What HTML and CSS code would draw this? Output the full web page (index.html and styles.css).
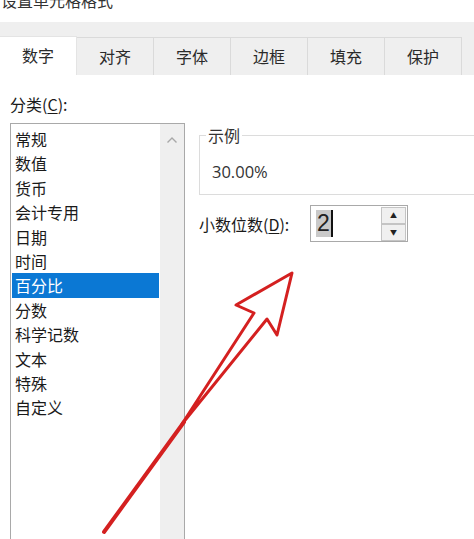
FILE: index.html
```html
<!DOCTYPE html>
<html lang="zh-CN">
<head>
    <meta charset="UTF-8">
    <meta name="viewport" content="width=device-width, initial-scale=1.0">
    <title>设置单元格格式</title>
    <link rel="stylesheet" href="styles.css">
</head>
<body>
    <div class="title">设置单元格格式</div>

    <div class="tab-strip">
        <div class="tab active">数字</div>
        <div class="tab">对齐</div>
        <div class="tab">字体</div>
        <div class="tab">边框</div>
        <div class="tab">填充</div>
        <div class="tab">保护</div>
    </div>

    <div class="content">
        <div class="left-col">
            <div class="field-label">分类(<u>C</u>):</div>
            <div class="listbox">
                <ul class="items">
                    <li>常规</li>
                    <li>数值</li>
                    <li>货币</li>
                    <li>会计专用</li>
                    <li>日期</li>
                    <li>时间</li>
                    <li class="selected">百分比</li>
                    <li>分数</li>
                    <li>科学记数</li>
                    <li>文本</li>
                    <li>特殊</li>
                    <li>自定义</li>
                </ul>
                <div class="scrollbar">
                    <svg class="chevron" width="12" height="8" viewBox="0 0 12 8">
                        <polyline points="1.5,6.5 6,2 10.5,6.5" fill="none" stroke="#a8a8a8" stroke-width="1.4"/>
                    </svg>
                </div>
            </div>
        </div>

        <div class="right-col">
            <fieldset class="sample">
                <legend>示例</legend>
                <div class="sample-value">30.00%</div>
            </fieldset>

            <div class="decimal-row">
                <div class="decimal-label">小数位数(<u>D</u>):</div>
                <div class="spinner">
                    <div class="spin-text"><span class="sel">2</span><span class="caret"></span></div>
                    <div class="spin-buttons">
                        <div class="spin-btn">&#9650;</div>
                        <div class="spin-btn">&#9660;</div>
                    </div>
                </div>
            </div>
        </div>
    </div>

    <!-- red annotation arrow drawn over the dialog -->
    <svg class="arrow" width="474" height="539" viewBox="0 0 474 539">
        <line x1="104" y1="532" x2="184" y2="422" stroke="#d42020" stroke-width="4" stroke-linecap="round"/>
        <polygon points="182,424 254,313 236,305 292,273 277,335 267,319" fill="none" stroke="#d42020" stroke-width="3" stroke-linejoin="round"/>
    </svg>
</body>
</html>
```

FILE: styles.css
```css
body {
    margin: 0;
    width: 474px;
    height: 539px;
    overflow: hidden;
    position: relative;
    background: #ffffff;
    font-family: "Noto Sans CJK SC", "Noto Sans", sans-serif;
    color: #1a1a1a;
}

.title {
    margin-top: -10px;
    height: 32px;
    padding-left: 1px;
    font-size: 16px;
    line-height: 20px;
    color: #333;
}

.tab-strip {
    display: flex;
    align-items: flex-end;
    height: 53px;
    background: #efefef;
    box-sizing: border-box;
    padding-top: 15px;
}

.tab {
    width: 77px;
    height: 38px;
    box-sizing: border-box;
    border: 1px solid #dadada;
    border-left: none;
    border-bottom: none;
    background: #efefef;
    font-size: 16px;
    text-align: center;
    line-height: 36px;
    color: #2a2a2a;
}

.tab.active {
    height: 39px;
    background: #ffffff;
    border-color: #e4e4e4;
}

.content {
    display: flex;
}

.left-col {
    padding-left: 10px;
}

.field-label {
    margin-top: 19px;
    margin-bottom: 9px;
    font-size: 16px;
    line-height: 20px;
}

.field-label u,
.decimal-label u {
    text-decoration-thickness: 1px;
    text-underline-offset: 2px;
}

.listbox {
    display: flex;
    width: 175px;
    height: 440px;
    box-sizing: border-box;
    border: 1px solid #a9a9a9;
}

.items {
    list-style: none;
    margin: 0;
    padding: 3px 1px 0;
    flex: 1;
}

.items li {
    height: 24.4px;
    line-height: 24.4px;
    padding-left: 3px;
    font-size: 16px;
}

.items li.selected {
    background: #0b78d4;
    color: #fff;
}

.scrollbar {
    width: 24px;
    background: #efefef;
    display: flex;
    justify-content: center;
    padding-top: 12px;
    box-sizing: border-box;
}

.chevron {
    display: block;
}

.right-col {
    margin-left: 14px;
    padding-top: 50px;
}

.sample {
    margin: 0;
    width: 264px;
    padding: 0 0 12px 10px;
    border: 1px solid #dcdcdc;
    border-right: none;
}

.sample legend {
    margin-left: -4px;
    padding: 0 2px;
    font-size: 16px;
    line-height: 20px;
    color: #333;
}

.sample-value {
    padding-top: 17px;
    padding-left: 2px;
    font-family: "Open Sans", "Noto Sans", sans-serif;
    font-size: 16.5px;
    line-height: 20px;
    color: #333;
}

.decimal-row {
    display: flex;
    align-items: center;
    margin-top: 10px;
}

.decimal-label {
    width: 111px;
    font-size: 16px;
    line-height: 20px;
}

.spinner {
    display: flex;
    width: 98px;
    height: 37px;
    box-sizing: border-box;
    border: 1px solid #a9a9a9;
}

.spin-text {
    flex: 1;
    display: flex;
    align-items: center;
    padding-left: 5px;
}

.spin-text .sel {
    background: #c9c9c9;
    font-family: "Liberation Sans", sans-serif;
    font-size: 23px;
    line-height: 27px;
    padding: 0 1px;
    color: #222;
}

.spin-text .caret {
    width: 2px;
    height: 27px;
    background: #111;
}

.spin-buttons {
    width: 27px;
    display: flex;
    flex-direction: column;
    padding: 1px;
    box-sizing: border-box;
}

.spin-btn {
    flex: 1;
    background: #f0f0f0;
    border: 1px solid #c4c4c4;
    font-size: 7px;
    line-height: 15px;
    text-align: center;
    color: #222;
}

.arrow {
    position: absolute;
    top: 0;
    left: 0;
    pointer-events: none;
}
```
